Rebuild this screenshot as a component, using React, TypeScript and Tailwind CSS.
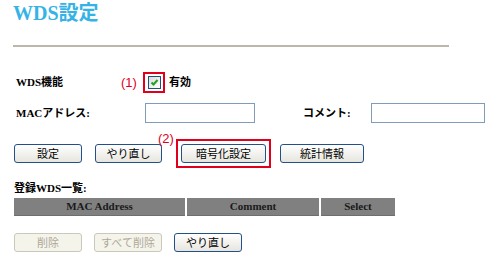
import React from 'react'

const label = "font-['Liberation_Serif','Noto_Sans_CJK_JP',serif] font-bold text-[11px] text-black"

function Btn({ children, disabled, className = '' }: { children: React.ReactNode; disabled?: boolean; className?: string }) {
  return (
    <button
      disabled={disabled}
      className={
        "h-[19px] rounded-[3px] border font-['Noto_Sans_CJK_JP',sans-serif] text-[11px] leading-none " +
        (disabled
          ? 'border-[#cac8bb] bg-[#f5f4ea] text-[#aca899] '
          : 'border-[#24508a] bg-gradient-to-b from-white to-[#e6e5de] text-black ') +
        className
      }
    >
      {children}
    </button>
  )
}

function Checkbox() {
  return (
    <div className="w-[13px] h-[13px] border border-[#1c5180] bg-gradient-to-br from-[#dcdcd6] to-white flex items-center justify-center">
      <svg width="9" height="9" viewBox="0 0 9 9">
        <path d="M1.5 4.5 L3.5 6.5 L7.5 2" fill="none" stroke="#21a121" strokeWidth="2" />
      </svg>
    </div>
  )
}

export default function App() {
  return (
    <div className="w-[500px] h-[274px] bg-white relative overflow-hidden">
      <h1 className="pl-[13px] pt-[1px] h-[24px] font-['Liberation_Serif','Noto_Sans_CJK_JP',serif] font-bold text-[20px] leading-[24px] text-[#35b3e6]">
        WDS設定
      </h1>

      <div className="ml-[13px] mt-[21px] w-[436px] h-[2px] bg-[#bcb7a9]" />

      {/* WDS機能 */}
      <div className="mt-[25px] flex items-center h-[21px]">
        <span className={label + ' pl-[16px] w-[121px]'}>WDS機能</span>
        <span className="w-[22px] font-['Liberation_Sans',sans-serif] text-[13px] text-[#e0001b]">(1)</span>
        <div className="w-[22px] h-[21px] border-2 border-[#e0001b] flex items-center justify-center">
          <Checkbox />
        </div>
        <span className={label + ' ml-[4px]'}>有効</span>
      </div>

      {/* MAC / comment */}
      <div className="mt-[10px] flex items-center h-[20px]">
        <span className={label + ' pl-[16px] w-[145px]'}>MACアドレス:</span>
        <input className="w-[110px] h-[20px] border border-[#7f9db9] bg-white" />
        <span className={label + ' ml-[48px] w-[68px]'}>コメント:</span>
        <input className="w-[114px] h-[20px] border border-[#7f9db9] bg-white" />
      </div>

      {/* buttons */}
      <div className="mt-[21px] flex items-center h-[19px] pl-[14px] relative">
        <Btn className="w-[68px]">設定</Btn>
        <Btn className="w-[67px] ml-[13px]">やり直し</Btn>
        <div className="ml-[14px] w-[95px] h-[29px] border-2 border-[#e0001b] flex items-center justify-center">
          <Btn className="w-[85px]">暗号化設定</Btn>
        </div>
        <Btn className="w-[84px] ml-[9px]">統計情報</Btn>
        <span className="absolute left-[158px] top-[-15px] font-['Liberation_Sans',sans-serif] text-[13px] text-[#e0001b]">(2)</span>
      </div>

      <div className={label + ' mt-[18px] pl-[14px] leading-[14px]'}>登録WDS一覧:</div>

      <div className="mt-[3px] ml-[14px] w-[381px] grid grid-cols-[171px_132px_74px] gap-x-[2px] h-[16px]">
        {['MAC Address', 'Comment', 'Select'].map(h => (
          <div key={h} className="bg-[#808080] border-b border-[#6e6e6e] flex items-center justify-center font-['Liberation_Serif',serif] font-bold text-[11px] text-[#1a1a1a]">
            {h}
          </div>
        ))}
      </div>

      <div className="mt-[19px] flex items-center pl-[14px] h-[19px]">
        <Btn disabled className="w-[68px]">削除</Btn>
        <Btn disabled className="w-[68px] ml-[12px]">すべて削除</Btn>
        <Btn className="w-[68px] ml-[12px]">やり直し</Btn>
      </div>
    </div>
  )
}
